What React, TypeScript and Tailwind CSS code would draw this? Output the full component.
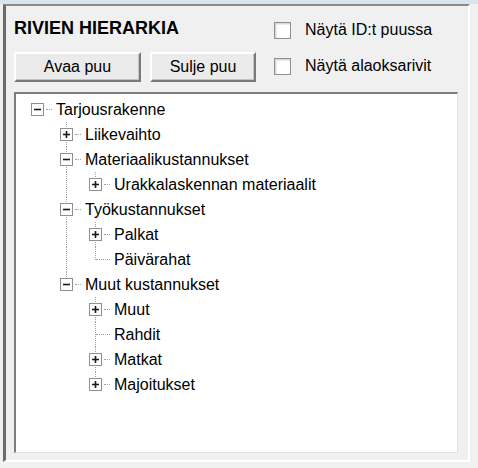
import React from "react";

type Row = {
  label: string;
  level: number;
  box: "plus" | "minus" | null;
  hasNext: boolean;
  cont: number[];
};

const rows: Row[] = [
  { label: "Tarjousrakenne", level: 0, box: "minus", hasNext: false, cont: [] },
  { label: "Liikevaihto", level: 1, box: "plus", hasNext: true, cont: [] },
  { label: "Materiaalikustannukset", level: 1, box: "minus", hasNext: true, cont: [] },
  { label: "Urakkalaskennan materiaalit", level: 2, box: "plus", hasNext: false, cont: [1] },
  { label: "Työkustannukset", level: 1, box: "minus", hasNext: true, cont: [] },
  { label: "Palkat", level: 2, box: "plus", hasNext: true, cont: [1] },
  { label: "Päivärahat", level: 2, box: null, hasNext: false, cont: [1] },
  { label: "Muut kustannukset", level: 1, box: "minus", hasNext: false, cont: [] },
  { label: "Muut", level: 2, box: "plus", hasNext: true, cont: [] },
  { label: "Rahdit", level: 2, box: null, hasNext: true, cont: [] },
  { label: "Matkat", level: 2, box: "plus", hasNext: true, cont: [] },
  { label: "Majoitukset", level: 2, box: "plus", hasNext: false, cont: [] },
];

// x of the guide line for a level (centre of the expand box)
const lineX = (level: number) => 21 + 29 * level;

const ExpandBox: React.FC<{ kind: "plus" | "minus" }> = ({ kind }) => (
  <svg width="13" height="13" viewBox="0 0 13 13" className="block">
    <rect x="0.5" y="0.5" width="12" height="12" fill="#fff" stroke="#8f8f8f" />
    <line x1="3" y1="6.5" x2="10" y2="6.5" stroke="#1a1a1a" strokeWidth="1.6" />
    {kind === "plus" && (
      <line x1="6.5" y1="3" x2="6.5" y2="10" stroke="#1a1a1a" strokeWidth="1.6" />
    )}
  </svg>
);

const TreeRow: React.FC<{ row: Row }> = ({ row }) => {
  const x = lineX(row.level);
  const boxLeft = 15 + 29 * row.level;
  return (
    <div className="relative h-[25px]">
      {row.cont.map((lv) => (
        <div
          key={lv}
          className="absolute top-0 bottom-0 border-l border-dotted border-[#a0a0a0]"
          style={{ left: lineX(lv) }}
        />
      ))}
      {row.level > 0 && (
        <div
          className="absolute top-0 h-[13px] border-l border-dotted border-[#a0a0a0]"
          style={{ left: x }}
        />
      )}
      {row.level > 0 && row.hasNext && (
        <div
          className="absolute top-[12px] bottom-0 border-l border-dotted border-[#a0a0a0]"
          style={{ left: x }}
        />
      )}
      {row.box ? (
        <>
          <div className="absolute top-[6px]" style={{ left: boxLeft }}>
            <ExpandBox kind={row.box} />
          </div>
          <div
            className="absolute top-[12px] w-[6px] border-t border-dotted border-[#a0a0a0]"
            style={{ left: boxLeft + 15 }}
          />
        </>
      ) : (
        <div
          className="absolute top-[12px] w-[14px] border-t border-dotted border-[#a0a0a0]"
          style={{ left: x + 1 }}
        />
      )}
      <span
        className="absolute top-0 leading-[25px] text-[16px] text-black whitespace-nowrap"
        style={{ left: boxLeft + 25 }}
      >
        {row.label}
      </span>
    </div>
  );
};

const WinButton: React.FC<{ label: string; width: string }> = ({ label, width }) => (
  <button
    className={`${width} h-[30px] bg-[#ebebeb] text-[16px] text-black border-t-2 border-l-2 border-r-2 border-b-2 border-t-white border-l-white border-r-[#7a7a7a] border-b-[#7a7a7a] shadow-[inset_-1px_-1px_0_#c4c4c4]`}
  >
    {label}
  </button>
);

const CheckRow: React.FC<{ label: string }> = ({ label }) => (
  <label className="flex items-center h-[18px]">
    <span className="w-[17px] h-[17px] border border-[#8e8f8f] bg-white shadow-[inset_1px_1px_0_#d8d8d8,inset_2px_2px_0_#ececec]" />
    <span className="ml-[14px] text-[16px] text-black leading-none">{label}</span>
  </label>
);

export default function App() {
  return (
    <div
      className="w-[478px] h-[468px] bg-[#f0f0f0] overflow-hidden"
      style={{ fontFamily: '"Liberation Sans", Arial, sans-serif' }}
    >
      <div className="h-[4px] bg-[#dbe3ec]" />
      <div className="ml-[3px] w-[467px] h-[458px] border-t-2 border-l-[3px] border-r-2 border-b-2 border-t-[#8a8a8a] border-l-[#6a6a6a] border-r-white border-b-white pl-[8px] pt-[11px]">
        <div className="flex">
          <div className="w-[260px]">
            <div className="h-[23px] leading-[23px] text-[18px] font-bold text-black">
              RIVIEN HIERARKIA
            </div>
            <div className="mt-[12px] flex gap-[9px]">
              <WinButton label="Avaa puu" width="w-[127px]" />
              <WinButton label="Sulje puu" width="w-[106px]" />
            </div>
          </div>
          <div className="pt-[4px] flex flex-col gap-[18px]">
            <CheckRow label="Näytä ID:t puussa" />
            <CheckRow label="Näytä alaoksarivit" />
          </div>
        </div>
        <div className="mt-[10px] w-[444px] h-[361px] bg-white border-t-2 border-l-2 border-r border-b border-t-[#7d7d7d] border-l-[#7d7d7d] border-r-[#e3e3e3] border-b-[#e3e3e3] pt-[3px]">
          {rows.map((r, i) => (
            <TreeRow key={i} row={r} />
          ))}
        </div>
      </div>
    </div>
  );
}
